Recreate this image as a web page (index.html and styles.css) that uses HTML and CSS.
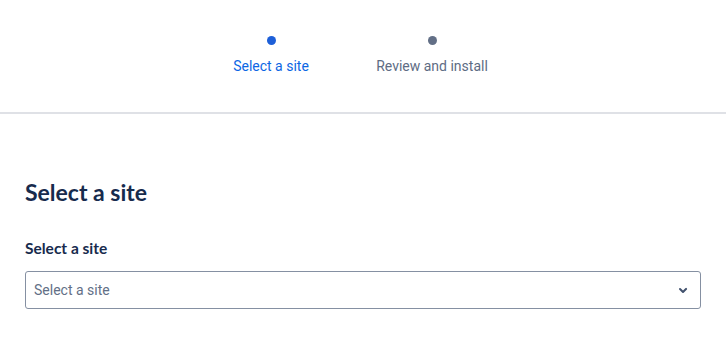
FILE: index.html
```html
<!DOCTYPE html>
<html lang="en">
<head>
  <meta charset="UTF-8">
  <meta name="viewport" content="width=device-width, initial-scale=1">
  <title>Select a site</title>
  <link rel="stylesheet" href="styles.css">
</head>
<body>
  <div class="steps">
    <div class="step step-active">
      <span class="dot"></span>
      <span class="step-label">Select a site</span>
    </div>
    <div class="step">
      <span class="dot"></span>
      <span class="step-label">Review and install</span>
    </div>
  </div>

  <div class="content">
    <h1 class="title">Select a site</h1>
    <label class="field-label" for="site">Select a site</label>
    <div class="select" id="site">
      <span class="placeholder">Select a site</span>
      <svg class="chevron" width="24" height="24" viewBox="0 0 24 24">
        <path d="M8.3 10.3a1 1 0 0 1 1.4 0L12 12.6l2.3-2.3a1 1 0 1 1 1.4 1.4l-3 3a1 1 0 0 1-1.4 0l-3-3a1 1 0 0 1 0-1.4z" fill="#42526e"/>
      </svg>
    </div>
  </div>
</body>
</html>
```

FILE: styles.css
```css
body {
  margin: 0;
  font-family: Roboto, 'Liberation Sans', Arial, sans-serif;
  background-color: #fff;
  color: #172b4d;
}
.steps {
  display: flex;
  justify-content: center;
  padding: 36px 23px 0 0;
  height: 76px;
  border-bottom: 2px solid #dfe1e6;
}
.step {
  width: 161px;
  display: flex;
  flex-direction: column;
  align-items: center;
  color: #5e6c84;
}
.dot {
  width: 9px;
  height: 9px;
  border-radius: 50%;
  background-color: #626f86;
}
.step-label {
  margin-top: 12px;
  font-size: 14px;
  line-height: 18px;
}
.step-active {
  color: #0c66e4;
}
.step-active .dot {
  background-color: #1d5fd8;
}
.content {
  padding: 0 25px;
}
.title {
  margin: 63px 0 0;
  font-family: 'Lato', sans-serif;
  font-size: 23px;
  font-weight: 700;
  line-height: 30px;
  color: #172b4d;
}
.field-label {
  display: block;
  margin-top: 31px;
  font-family: 'Lato', sans-serif;
  font-size: 15.5px;
  font-weight: 700;
  line-height: 20px;
}
.select {
  margin-top: 13px;
  height: 36px;
  border: 1px solid #8590a2;
  border-radius: 3px;
  display: flex;
  align-items: center;
  justify-content: space-between;
  padding: 0 5px 0 8px;
}
.placeholder {
  font-size: 14px;
  color: #626f86;
}
.chevron {
  display: block;
}
```
